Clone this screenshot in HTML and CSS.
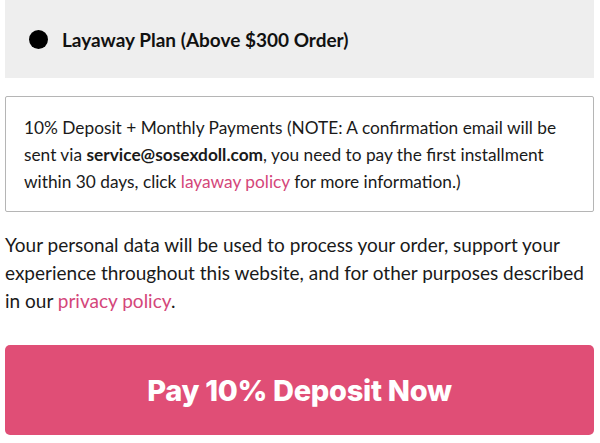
FILE: index.html
```html
<!DOCTYPE html>
<html>
<head>
<meta charset="utf-8">
<link rel="stylesheet" href="styles.css">
</head>
<body>
<div class="page">
  <div class="method">
    <span class="dot"></span>
    <span class="method-label">Layaway Plan (Above $300 Order)</span>
  </div>
  <div class="desc">
    10% Deposit + Monthly Payments (NOTE: A confirmation email will be sent via <strong>service@sosexdoll.com</strong>, you need to pay the first installment within 30 days, click <a href="#">layaway policy</a> for more information.)
  </div>
  <p class="privacy">Your personal data will be used to process your order, support your experience throughout this website, and for other purposes described in our <a href="#">privacy policy</a>.</p>
  <button class="pay">Pay 10% Deposit Now</button>
</div>
</body>
</html>
```
FILE: styles.css
```css
html, body {
  margin: 0;
  padding: 0;
  background: #fff;
}
.page {
  padding: 0 6px 0 5px;
  font-family: Lato, "Liberation Sans", sans-serif;
  color: #1a1a1a;
}
.method {
  background: #eeeeee;
  height: 78px;
  display: flex;
  align-items: center;
  padding-left: 24px;
  gap: 14px;
  box-sizing: border-box;
}
.dot {
  width: 19px;
  height: 19px;
  border-radius: 50%;
  background: #000;
}
.method-label {
  font-size: 19px;
  font-weight: 700;
  color: #111;
}
.desc {
  margin-top: 18px;
  border: 1px solid #b5b5b5;
  border-radius: 2px;
  padding: 17px 18px 16px;
  font-size: 17.3px;
  line-height: 27px;
}
.desc strong { font-weight: 700; }
a {
  color: #d4467a;
  text-decoration: none;
}
.privacy {
  margin: 19px 0 0;
  font-size: 19px;
  line-height: 28px;
}
.pay {
  display: block;
  width: 100%;
  margin-top: 30px;
  height: 90px;
  border: 0;
  border-radius: 5px;
  background: #e04e76;
  color: #fff;
  font-family: Inter, "Open Sans", sans-serif;
  font-weight: 800;
  font-size: 29px;
  letter-spacing: -0.3px;
}
```
